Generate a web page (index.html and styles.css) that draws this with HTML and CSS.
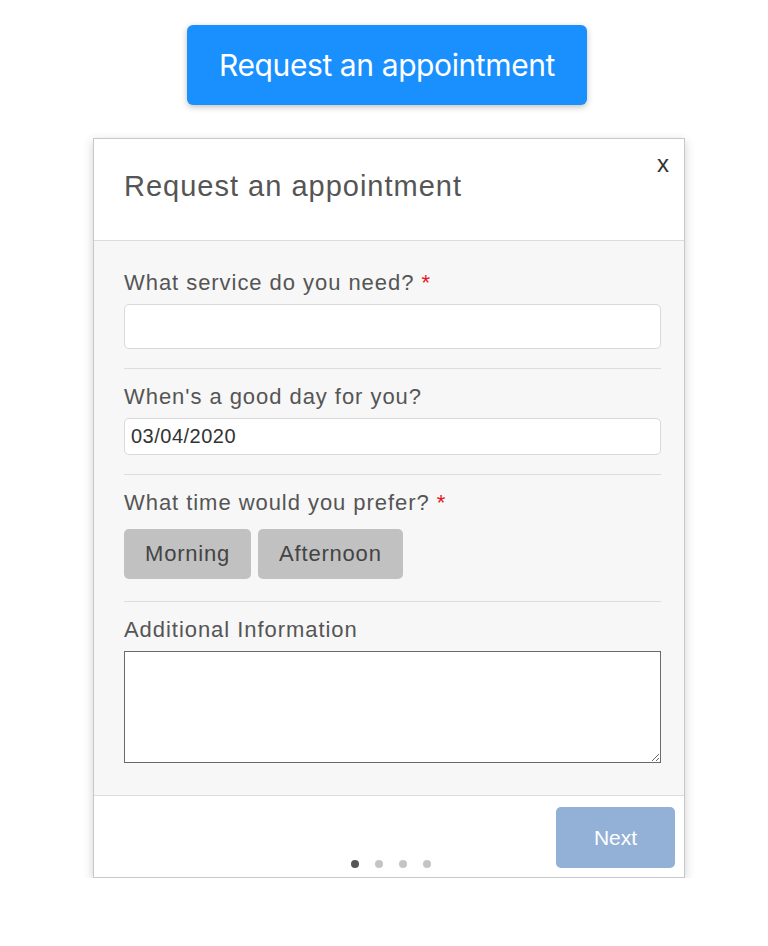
FILE: index.html
```html
<!DOCTYPE html>
<html lang="en">
<head>
    <meta charset="UTF-8">
    <title>Request an appointment</title>
    <link rel="stylesheet" href="styles.css">
</head>
<body>
    <div class="page">
        <button class="openBtn">Request an appointment</button>

        <div class="modal">
            <div class="modalHead">
                <h2 class="modalTitle">Request an appointment</h2>
                <span class="closeX">x</span>
            </div>

            <form class="modalBody">
                <div class="field">
                    <label class="lbl">What service do you need? <span class="req">*</span></label>
                    <input class="ipt iptTall" type="text">
                </div>
                <div class="field">
                    <label class="lbl">When's a good day for you?</label>
                    <input class="ipt iptDate" type="text" value="03/04/2020">
                </div>
                <div class="field">
                    <label class="lbl">What time would you prefer? <span class="req">*</span></label>
                    <div class="timeRow">
                        <button type="button" class="timeBtn">Morning</button>
                        <button type="button" class="timeBtn">Afternoon</button>
                    </div>
                </div>
                <div class="field lastField">
                    <label class="lbl">Additional Information</label>
                    <textarea class="txt"></textarea>
                </div>
            </form>

            <div class="modalFoot">
                <button class="nextBtn">Next</button>
                <div class="dots">
                    <span class="dot on"></span>
                    <span class="dot"></span>
                    <span class="dot"></span>
                    <span class="dot"></span>
                </div>
            </div>
        </div>
    </div>
</body>
</html>
```

FILE: styles.css
```css
body{
    margin: 0px;
    background: #ffffff;
    font-family: "Liberation Sans", Arial, sans-serif;
}
.page{
    display: flex;
    flex-direction: column;
    align-items: center;
    padding-top: 25px;
    padding-left: 6px;
}
.openBtn{
    width: 400px;
    height: 80px;
    border: 0px;
    border-radius: 6px;
    background-color: #1a90ff;
    color: #ffffff;
    font-family: Inter, "Liberation Sans", sans-serif;
    font-size: 30px;
    letter-spacing: -0.4px;
    box-shadow: 0 2px 6px rgba(0, 0, 0, 0.25);
}
.modal{
    width: 590px;
    margin-top: 33px;
    margin-left: 4px;
    border: 1px solid #c8c8c8;
    box-shadow: 0 3px 10px rgba(0, 0, 0, 0.18);
    background: #ffffff;
}
.modalHead{
    display: flex;
    justify-content: space-between;
    align-items: flex-start;
    height: 101px;
    padding: 0px 15px 0px 30px;
    border-bottom: 1px solid #dcdcdc;
}
.modalTitle{
    margin: 30px 0 0 0;
    font-size: 29px;
    font-weight: normal;
    line-height: 34px;
    letter-spacing: 1px;
    color: #555555;
}
.closeX{
    margin-top: 11px;
    font-size: 24px;
    color: #333333;
}
.modalBody{
    margin: 0px;
    padding: 14px 23px 0px 30px;
    background: #f7f7f7;
}
.field{
    display: flex;
    flex-direction: column;
    padding: 15px 0 19px 0;
    border-bottom: 1px solid #dddddd;
}
.lastField{
    border-bottom: 0px;
    padding-bottom: 32px;
}
.lbl{
    font-size: 22px;
    line-height: 26px;
    letter-spacing: 0.95px;
    color: #555555;
    margin-bottom: 8px;
}
.req{
    color: #e8141c;
}
.ipt{
    box-sizing: border-box;
    width: 100%;
    border: 1px solid #d9d9d9;
    border-radius: 5px;
    background: #ffffff;
    font-family: "Liberation Sans", Arial, sans-serif;
    color: #333333;
}
.iptTall{
    height: 45px;
}
.iptDate{
    height: 37px;
    padding: 0 6px;
    font-size: 20px;
    letter-spacing: 0.5px;
}
.timeRow{
    display: flex;
    gap: 7px;
    margin: 5px 0 3px 0;
}
.timeBtn{
    height: 50px;
    padding: 0 21px;
    border: 0px;
    border-radius: 5px;
    background-color: #c1c1c1;
    color: #444444;
    font-family: "Liberation Sans", Arial, sans-serif;
    font-size: 22px;
    letter-spacing: 0.8px;
}
.txt{
    box-sizing: border-box;
    width: 100%;
    height: 112px;
    border: 1px solid #6a6a6a;
    background: #ffffff;
    margin: 0px;
}
.modalFoot{
    display: grid;
    padding: 11px 9px 9px 8px;
    border-top: 1px solid #dcdcdc;
}
.nextBtn{
    grid-area: 1 / 1;
    justify-self: end;
    width: 119px;
    height: 61px;
    border: 0px;
    border-radius: 5px;
    background-color: #93b0d7;
    color: #ffffff;
    font-family: "Liberation Sans", Arial, sans-serif;
    font-size: 21px;
}
.dots{
    grid-area: 1 / 1;
    justify-self: center;
    align-self: end;
    display: flex;
    gap: 16px;
    margin-left: 4px;
}
.dot{
    width: 8px;
    height: 8px;
    border-radius: 50%;
    background: #c4c4c4;
}
.dot.on{
    background: #555555;
}
```
